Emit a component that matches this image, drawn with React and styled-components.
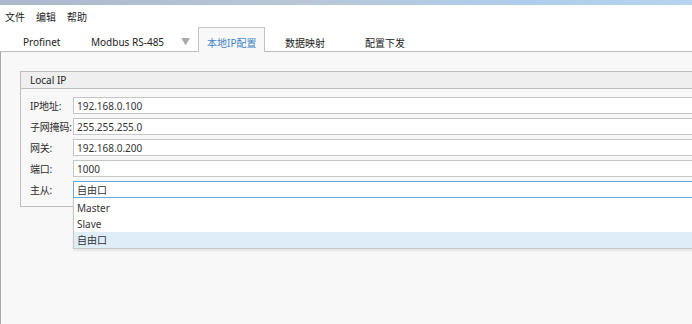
import React from "react";
import styled, { createGlobalStyle } from "styled-components";

const Global = createGlobalStyle`
  html, body {
    margin: 0;
    padding: 0;
    background: #ffffff;
  }
  body {
    font-family: "Noto Sans", "Open Sans", "Noto Sans CJK SC", sans-serif;
    font-size: 10px;
    color: #222;
  }
`;

const tabs = [
  { label: "Profinet", pl: 9, w: 69 },
  { label: "Modbus RS-485", pl: 8, w: 116, arrow: true },
  { label: "本地IP配置", pl: 8, w: 67, active: true },
  { label: "数据映射", pl: 19, w: 80 },
  { label: "配置下发", pl: 19, w: 80 },
];

const fields = [
  { label: "IP地址:", value: "192.168.0.100" },
  { label: "子网掩码:", value: "255.255.255.0" },
  { label: "网关:", value: "192.168.0.200" },
  { label: "端口:", value: "1000" },
];

const options = ["Master", "Slave", "自由口"];

const App = () => {
  return (
    <>
      <Global />
      <Window>
        <TitleStrip />
        <MenuBar>
          <MenuItem>文件</MenuItem>
          <MenuItem>编辑</MenuItem>
          <MenuItem>帮助</MenuItem>
        </MenuBar>
        <TabBar>
          {tabs.map((t) => (
            <Tab key={t.label} $pl={t.pl} $w={t.w} $active={t.active}>
              {t.label}
              {t.arrow && <TabArrow>▼</TabArrow>}
            </Tab>
          ))}
        </TabBar>
        <Content>
          <Group>
            <GroupHeader>Local IP</GroupHeader>
            <GroupBody>
              {fields.map((f) => (
                <Row key={f.label}>
                  <Label>{f.label}</Label>
                  <Input>{f.value}</Input>
                </Row>
              ))}
              <Row>
                <Label>主从:</Label>
                <SelectWrap>
                  <Input $focus>自由口</Input>
                  <Dropdown>
                    {options.map((o) => (
                      <Option key={o} $selected={o === "自由口"}>
                        {o}
                      </Option>
                    ))}
                  </Dropdown>
                </SelectWrap>
              </Row>
            </GroupBody>
          </Group>
        </Content>
      </Window>
    </>
  );
};

const Window = styled.div`
  width: 692px;
  height: 324px;
  overflow: hidden;
  display: flex;
  flex-direction: column;
  background: #ffffff;
`;

const TitleStrip = styled.div`
  height: 5px;
  flex-shrink: 0;
  background: linear-gradient(90deg, #a9b8cc 0%, #b9c7d9 45%, #aecdec 75%, #b6d4f0 100%);
`;

const MenuBar = styled.div`
  height: 22px;
  display: flex;
  align-items: center;
  padding-left: 5px;
  gap: 11px;
  flex-shrink: 0;
`;

const MenuItem = styled.span`
  color: #222;
  font-family: "Noto Sans CJK SC", sans-serif;
`;

const TabBar = styled.div`
  height: 24px;
  display: flex;
  padding-left: 13px;
  border-bottom: 1px solid #bcbcbc;
  flex-shrink: 0;
`;

const Tab = styled.div`
  position: relative;
  width: ${(p) => p.$w}px;
  box-sizing: border-box;
  padding-left: ${(p) => p.$pl}px;
  padding-top: 5px;
  color: ${(p) => (p.$active ? "#3e84c8" : "#222")};
  font-family: "Noto Sans", "Noto Sans CJK SC", sans-serif;
  background: ${(p) => (p.$active ? "#f8f8f8" : "transparent")};
  border: 1px solid ${(p) => (p.$active ? "#c4c4c4" : "transparent")};
  border-bottom: none;
  margin-bottom: ${(p) => (p.$active ? "-1px" : "0")};
  display: flex;
  align-items: center;
  height: ${(p) => (p.$active ? "25px" : "24px")};
`;

const TabArrow = styled.span`
  position: absolute;
  left: 98px;
  top: 7px;
  font-size: 9px;
  color: #a8a8a8;
`;

const Content = styled.div`
  flex: 1;
  background: #f8f8f8;
  border-left: 1px solid #a9a9a9;
  padding: 19px 0 0 19px;
`;

const Group = styled.div`
  width: 700px;
  border: 1px solid #bdbdbd;
  border-right: none;
`;

const GroupHeader = styled.div`
  height: 16px;
  line-height: 16px;
  background: #efefef;
  border-bottom: 1px solid #bdbdbd;
  padding-left: 9px;
  color: #222;
`;

const GroupBody = styled.div`
  display: flex;
  flex-direction: column;
  gap: 4px;
  padding: 8px 0 8px 9px;
`;

const Row = styled.div`
  display: flex;
  align-items: center;
  height: 17px;
`;

const Label = styled.div`
  width: 43px;
  flex-shrink: 0;
  color: #2a2a2a;
  font-family: "Noto Sans", "Noto Sans CJK SC", sans-serif;
  letter-spacing: -0.2px;
`;

const SelectWrap = styled.div`
  position: relative;
  flex: 1;
  display: flex;
`;

const Input = styled.div`
  flex: 1;
  height: 17px;
  box-sizing: border-box;
  background: #ffffff;
  border: 1px solid ${(p) => (p.$focus ? "#6aa6d6" : "#c6c6c6")};
  padding-left: 3px;
  line-height: 16px;
  color: #333;
  font-family: "Noto Sans", "Noto Sans CJK SC", sans-serif;
`;

const Dropdown = styled.div`
  position: absolute;
  left: 0;
  right: 0;
  top: 17px;
  background: #ffffff;
  border: 1px solid #c8c8c8;
  border-top: none;
  padding-top: 2px;
  box-shadow: 0 2px 2px rgba(0, 0, 0, 0.08);
  z-index: 2;
`;

const Option = styled.div`
  height: 16px;
  line-height: 17px;
  padding-left: 3px;
  color: #333;
  font-family: "Noto Sans", "Noto Sans CJK SC", sans-serif;
  background: ${(p) => (p.$selected ? "#deedf8" : "transparent")};
`;

export default App;
